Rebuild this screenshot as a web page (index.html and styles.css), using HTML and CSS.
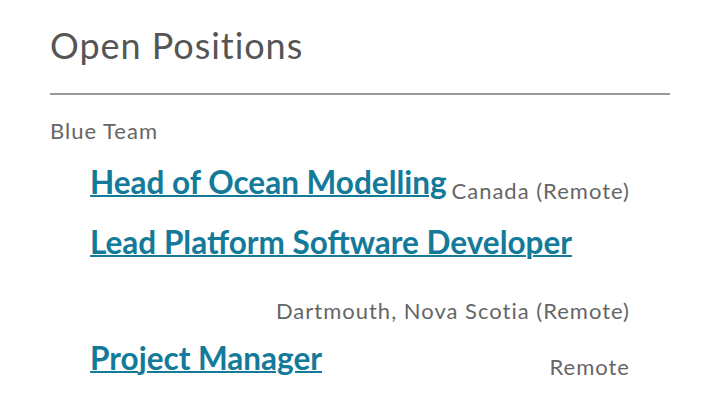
FILE: index.html
```html
<!DOCTYPE html>
<html lang="en">
<head>
    <meta charset="UTF-8">
    <meta name="viewport" content="width=device-width, initial-scale=1.0">
    <title>Open Positions</title>
    <link rel="stylesheet" href="styles.css">
</head>
<body>
    <div class="board">
        <h1>Open Positions</h1>

        <section class="department">
            <h3>Blue Team</h3>

            <div class="opening">
                <a href="#">Head of Ocean Modelling</a>
                <span class="location">Canada (Remote)</span>
            </div>
            <div class="opening">
                <a href="#">Lead Platform Software Developer</a>
                <span class="location">Dartmouth, Nova Scotia (Remote)</span>
            </div>
            <div class="opening">
                <a href="#">Project Manager</a>
                <span class="location">Remote</span>
            </div>
        </section>
    </div>
</body>
</html>
```

FILE: styles.css
```css
body {
    margin: 0;
    font-family: Lato, "Open Sans", sans-serif;
    color: #555;
    background: #fff;
}
.board {
    padding: 24px 50px 0;
}
h1 {
    font-size: 36px;
    font-weight: 400;
    letter-spacing: 0.95px;
    line-height: 1.2;
    margin: 0;
    padding-bottom: 26px;
    border-bottom: 2px solid #999;
}
.department h3 {
    font-size: 22px;
    font-weight: 400;
    letter-spacing: 1px;
    line-height: 1.2;
    color: #666;
    margin: 23px 0 7px;
}
.opening {
    display: flex;
    flex-wrap: wrap;
    align-items: flex-start;
    margin: 0 40px;
}
.opening a {
    font-size: 31.5px;
    font-weight: 700;
    line-height: 60px;
    color: #147a9a;
    text-decoration-thickness: 2px;
}
.location {
    margin: 22px 0 0 auto;
    font-size: 22px;
    letter-spacing: 1px;
    line-height: 34px;
    color: #666;
}
```
